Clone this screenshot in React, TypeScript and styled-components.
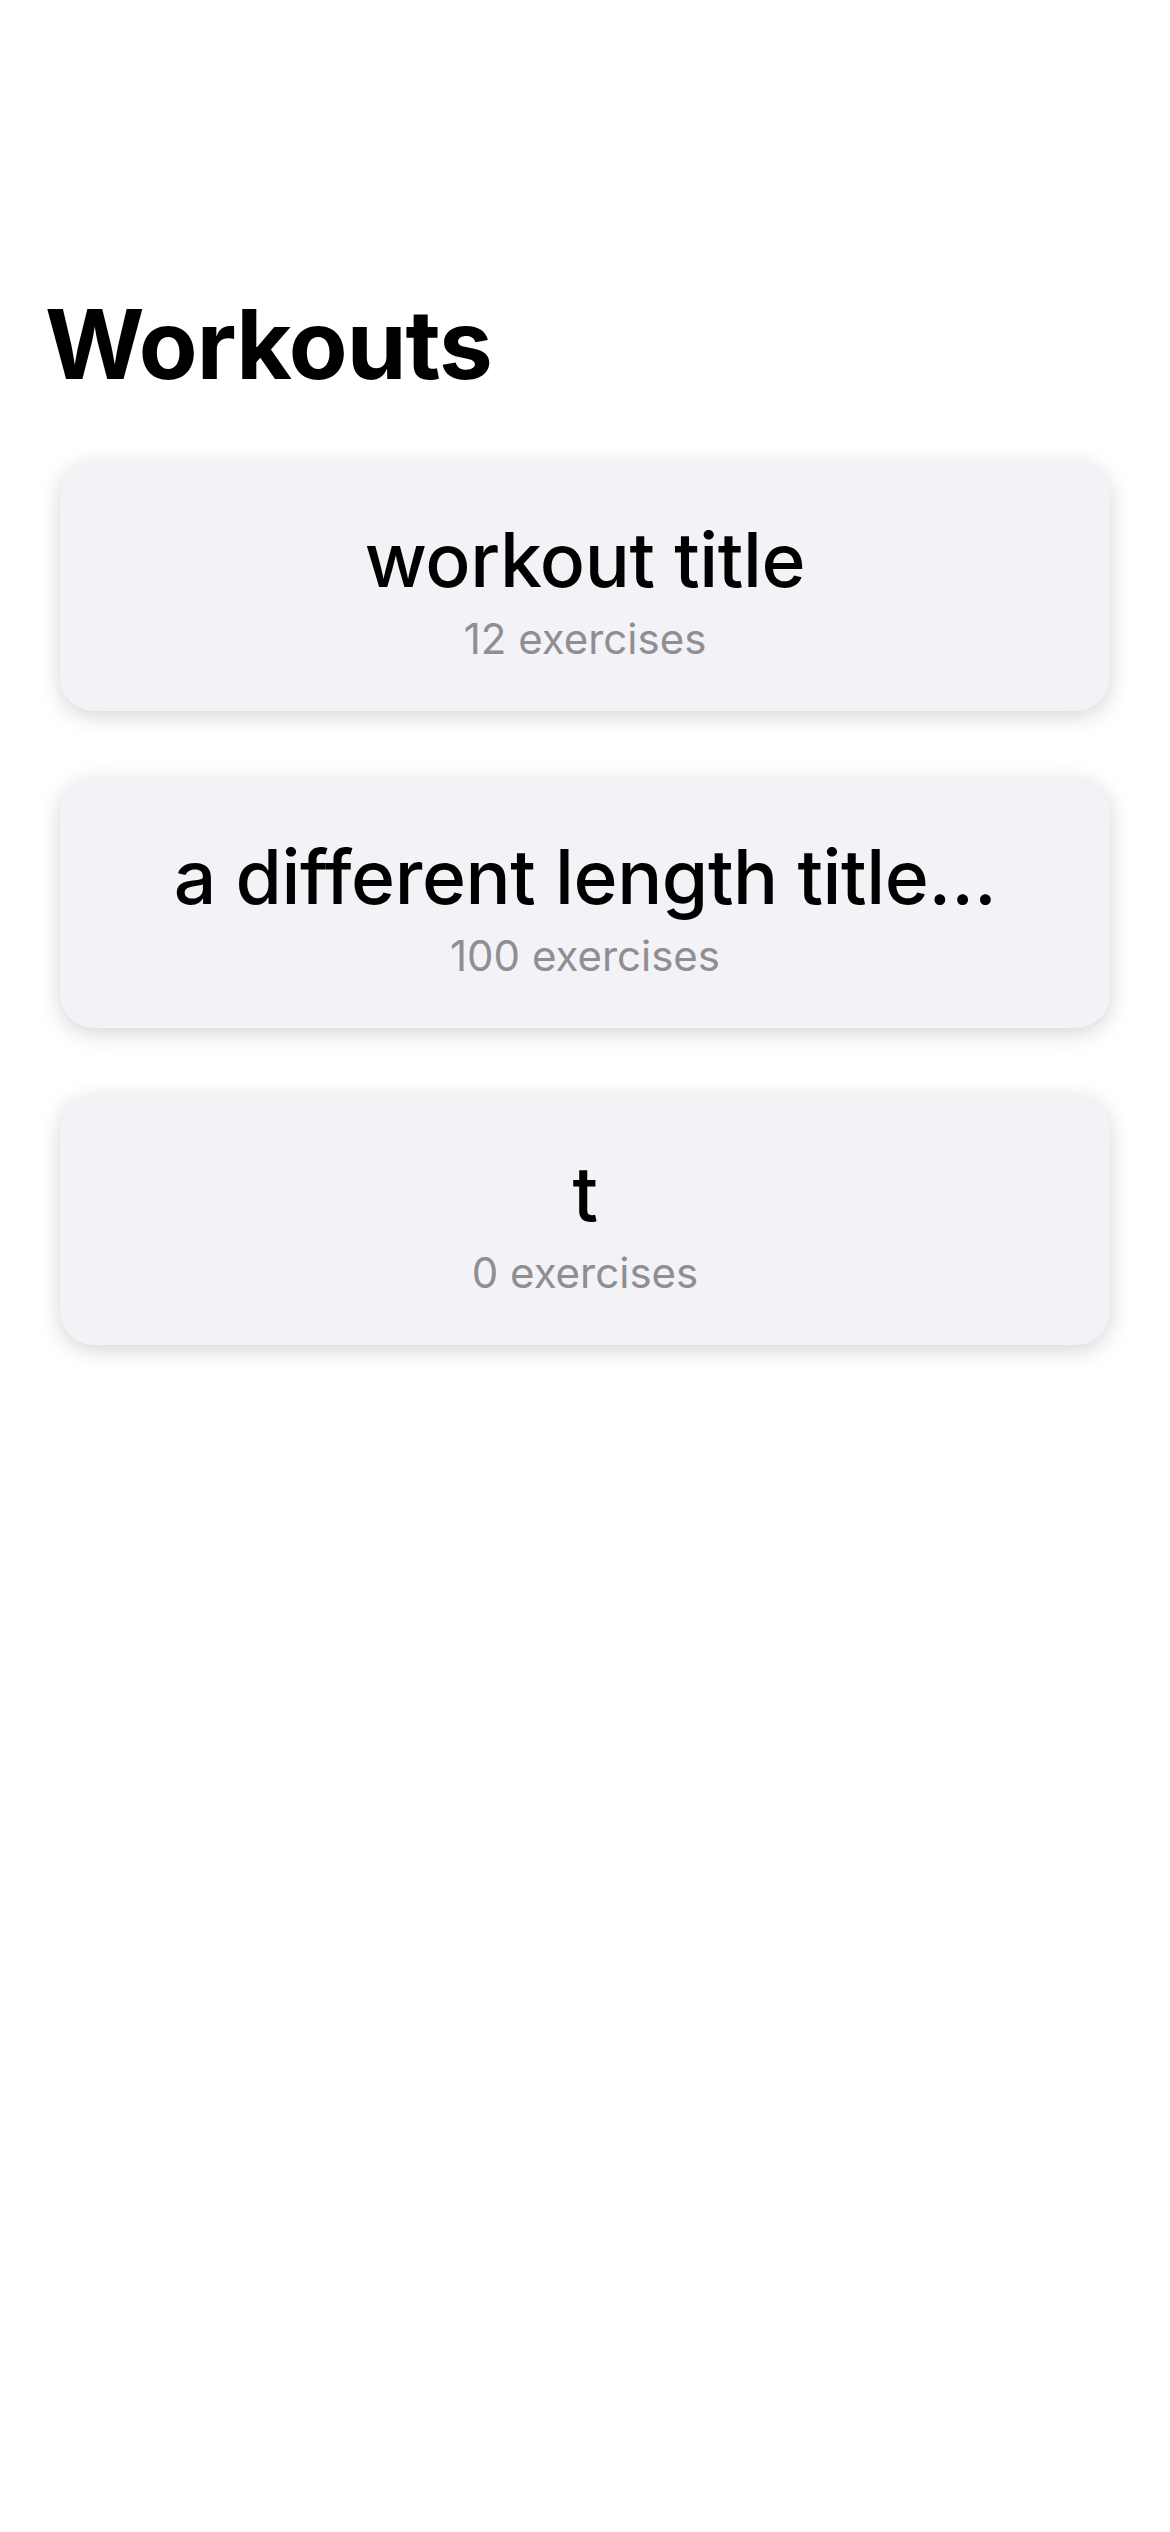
import React from "react";
import styled, { createGlobalStyle } from "styled-components";

const GlobalStyle = createGlobalStyle`
    html, body {
        margin: 0;
        padding: 0;
        background: #ffffff;
    }
    body {
        font-family: Inter, "Noto Sans", "Liberation Sans", sans-serif;
        -webkit-font-smoothing: antialiased;
    }
`;

const Screen = styled.div`
    min-height: 2532px;
    width: 1170px;
    box-sizing: border-box;
    padding: 283px 60px 0 60px;
    background: #ffffff;
`;

const PageTitle = styled.h1`
    margin: 0 0 56px -15px;
    font-size: 96px;
    line-height: 122px;
    font-weight: 700;
    letter-spacing: -1px;
    color: #000000;
`;

const WorkoutList = styled.div`
    display: flex;
    flex-direction: column;
    gap: 67px;
`;

const WorkoutCard = styled.div`
    height: 250px;
    box-sizing: border-box;
    display: flex;
    flex-direction: column;
    align-items: center;
    justify-content: center;
    padding: 6px 60px 0;
    background: #f2f2f7;
    border-radius: 34px;
    box-shadow: 0 5px 22px rgba(0, 0, 0, 0.17);
    cursor: pointer;
`;

const WorkoutName = styled.div`
    font-size: 75px;
    line-height: 92px;
    font-weight: 500;
    letter-spacing: -0.4px;
    color: #000000;
    white-space: nowrap;
`;

const ExerciseCount = styled.div`
    margin-top: 8px;
    font-size: 42px;
    line-height: 50px;
    font-weight: 400;
    color: #8e8e93;
`;

interface IWorkout {
    title: string;
    exercises: number;
}

const workouts: IWorkout[] = [
    { title: "workout title", exercises: 12 },
    { title: "a different length title…", exercises: 100 },
    { title: "t", exercises: 0 },
];

const App: React.FC = () => {
    return (
        <>
            <GlobalStyle />
            <Screen>
                <PageTitle>Workouts</PageTitle>
                <WorkoutList>
                    {workouts.map((w) => (
                        <WorkoutCard key={w.title}>
                            <WorkoutName>{w.title}</WorkoutName>
                            <ExerciseCount>{w.exercises} exercises</ExerciseCount>
                        </WorkoutCard>
                    ))}
                </WorkoutList>
            </Screen>
        </>
    );
};

export default App;
